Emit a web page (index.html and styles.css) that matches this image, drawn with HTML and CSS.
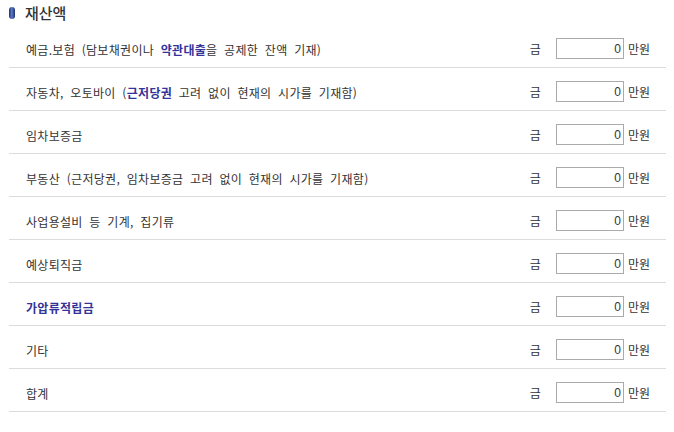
FILE: index.html
```html
<!DOCTYPE html>
<html lang="ko">
<head>
<meta charset="UTF-8">
<title>재산액</title>
<link rel="stylesheet" href="styles.css">
</head>
<body>

<div class="asset-box">
  <h2 class="title"><span class="bullet"></span>재산액</h2>

  <div class="row">
    <div class="label">예금.보험 (담보채권이나 <b>약관대출</b>을 공제한 잔액 기재)</div>
    <div class="amount">금 <input type="text" value="0"> 만원</div>
  </div>
  <div class="row">
    <div class="label">자동차, 오토바이 (<b>근저당권</b> 고려 없이 현재의 시가를 기재함)</div>
    <div class="amount">금 <input type="text" value="0"> 만원</div>
  </div>
  <div class="row">
    <div class="label">임차보증금</div>
    <div class="amount">금 <input type="text" value="0"> 만원</div>
  </div>
  <div class="row">
    <div class="label">부동산 (근저당권, 임차보증금 고려 없이 현재의 시가를 기재함)</div>
    <div class="amount">금 <input type="text" value="0"> 만원</div>
  </div>
  <div class="row">
    <div class="label">사업용설비 등 기계, 집기류</div>
    <div class="amount">금 <input type="text" value="0"> 만원</div>
  </div>
  <div class="row">
    <div class="label">예상퇴직금</div>
    <div class="amount">금 <input type="text" value="0"> 만원</div>
  </div>
  <div class="row">
    <div class="label"><b>가압류적립금</b></div>
    <div class="amount">금 <input type="text" value="0"> 만원</div>
  </div>
  <div class="row">
    <div class="label">기타</div>
    <div class="amount">금 <input type="text" value="0"> 만원</div>
  </div>
  <div class="row">
    <div class="label">합계</div>
    <div class="amount">금 <input type="text" value="0"> 만원</div>
  </div>
</div>

</body>
</html>
```

FILE: styles.css
```css
body {
    margin: 0;
    padding: 0;
    background-color: #fff;
    font-family: "Noto Sans CJK KR", "Noto Sans", sans-serif;
    font-size: 12px;
    color: #333;
}

.asset-box {
    width: 657px;
    margin-left: 9px;
}

.title {
    display: flex;
    align-items: center;
    height: 25px;
    margin: 0;
    font-size: 15px;
    font-weight: 500;
    color: #333;
    line-height: 1;
}

/* 파란 캡슐 아이콘 */
.bullet {
    display: inline-block;
    width: 6px;
    height: 12px;
    margin-right: 10px;
    margin-top: 1px;
    border-radius: 3px;
    background: linear-gradient(90deg, #1c2f6e, #5a7cc8 45%, #1c2f6e);
}

.row {
    display: flex;
    align-items: center;
    padding: 13px 16px 8px 17px;
    border-bottom: 1px solid #dcdcdc;
}

.label {
    flex: 1;
    padding-top: 3px;
    line-height: 18px;
    letter-spacing: 0.3px;
    word-spacing: 3px;
}

.label b {
    color: #33339a;
    font-weight: bold;
}

.amount {
    display: flex;
    align-items: center;
    line-height: 18px;
}

.amount input {
    width: 68px;
    height: 21px;
    margin: 0 4px 0 15px;
    padding: 0 2px 0 0;
    border: 1px solid #aaa;
    box-sizing: border-box;
    text-align: right;
    font-family: "Liberation Sans", sans-serif;
    font-size: 12px;
    color: #333;
}
```
